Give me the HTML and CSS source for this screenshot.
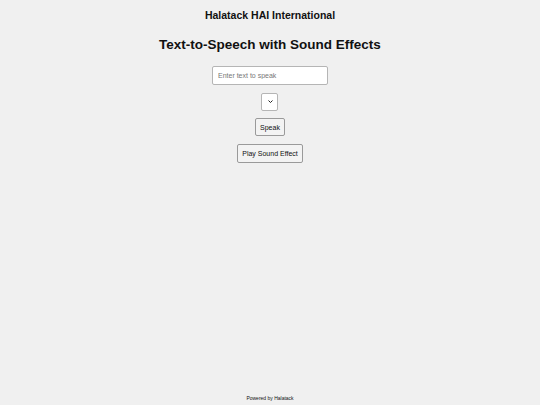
FILE: index.html
```html
<!DOCTYPE html>
<html lang="en">
<head>
<meta charset="utf-8">
<title>Halatack HAI International</title>
<link rel="stylesheet" href="styles.css">
</head>
<body>
<div class="page">
  <header class="site-header">Halatack HAI International</header>
  <main class="tts">
    <h1 class="tts-title">Text-to-Speech with Sound Effects</h1>
    <div class="controls">
      <input class="text-input" type="text" placeholder="Enter text to speak">
      <div class="select-wrap">
        <select class="voice-select"></select>
        <svg class="chevron" width="5" height="3" viewBox="0 0 5 3"><path d="M0.5 0.5 L2.5 2.5 L4.5 0.5" fill="none" stroke="#222" stroke-width="1"/></svg>
      </div>
      <button class="btn" type="button">Speak</button>
      <button class="btn btn-wide" type="button">Play Sound Effect</button>
    </div>
  </main>
  <footer class="site-footer">Powered by Halatack</footer>
</div>
</body>
</html>
```

FILE: styles.css
```css
html, body {
  margin: 0;
  padding: 0;
  background: #f0f0f0;
  font-family: "Liberation Sans", Arial, sans-serif;
  color: #111;
}

.page {
  display: flex;
  flex-direction: column;
  align-items: center;
  min-height: 100vh;
  box-sizing: border-box;
}

.site-header {
  padding-top: 9px;
  font-size: 10.5px;
  font-weight: bold;
  line-height: 12px;
}

.tts {
  display: flex;
  flex-direction: column;
  align-items: center;
}

.tts-title {
  margin: 16px 0 0;
  font-size: 13.5px;
  line-height: 16px;
  font-weight: bold;
}

.controls {
  display: flex;
  flex-direction: column;
  align-items: center;
  gap: 8px;
  margin-top: 13px;
}

.text-input {
  box-sizing: border-box;
  width: 116px;
  height: 19px;
  margin: 0;
  padding: 0 5px;
  border: 1px solid #b5b5b5;
  border-radius: 2px;
  background: #fff;
  font-family: inherit;
  font-size: 7px;
}

.text-input::placeholder {
  color: #777;
}

.select-wrap {
  position: relative;
  width: 17px;
  height: 18px;
  margin-top: -1px;
}

.voice-select {
  appearance: none;
  -webkit-appearance: none;
  box-sizing: border-box;
  width: 17px;
  height: 18px;
  margin: 0;
  padding: 0;
  border: 1px solid #b5b5b5;
  border-radius: 2px;
  background: #fff;
}

.chevron {
  position: absolute;
  right: 5px;
  top: 8px;
  pointer-events: none;
}

.btn {
  box-sizing: border-box;
  height: 18px;
  margin: 0;
  padding: 0 4px;
  border: 1px solid #9a9a9a;
  border-radius: 2px;
  background: #f3f3f3;
  font-family: inherit;
  font-size: 7px;
  color: #111;
}

.btn-wide {
  height: 19px;
}

.site-footer {
  margin-top: auto;
  padding-bottom: 4px;
  font-size: 5px;
  line-height: 6px;
}
```
